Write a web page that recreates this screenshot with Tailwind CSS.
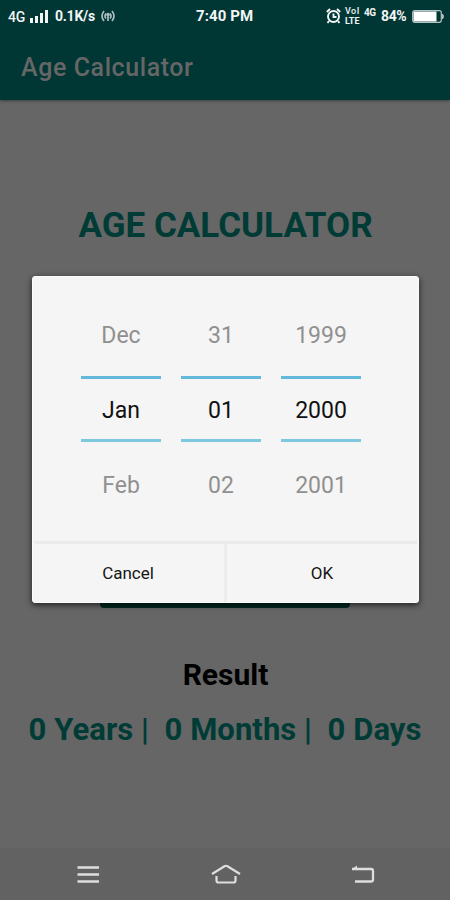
<!DOCTYPE html>
<html lang="en">
<head>
  <meta charset="UTF-8">
  <meta name="viewport" content="width=device-width, initial-scale=1.0">
  <title>Age Calculator</title>
  <script src="https://cdn.jsdelivr.net/npm/@tailwindcss/browser@4"></script>
</head>
<body class="bg-[#666666] font-[Roboto,sans-serif]">
  <div class="relative flex h-[900px] w-[450px] flex-col overflow-hidden bg-[#666666]">
    <!-- Header -->
    <header class="h-[100px] shrink-0 bg-[#003634] shadow-[0_1px_3px_rgba(0,0,0,0.4)]">
      <!-- Status bar -->
      <div class="grid h-8 grid-cols-[196px_114px_140px] items-center text-sm font-bold text-[#f1f5f4]">
        <div class="flex items-center pl-2">
          <span class="w-[19px] pt-0.5 text-[14px] font-medium tracking-[-0.3px]">4G</span>
          <svg class="ml-[3px] h-[15px] w-[18px]" viewBox="0 0 18 15" fill="currentColor">
            <path d="M0 9h3v5H0zM5 7h3v7H5zM10 4h3v10h-3zM15 1h3v13h-3z"/>
          </svg>
          <span class="ml-[7px] w-[42px] whitespace-nowrap text-[14px] tracking-[-0.25px]">0.1K/s</span>
          <svg class="ml-[4px] h-3 w-[14px]" viewBox="0 0 14 12" fill="none" stroke="#a9bfbd" stroke-width="1.7">
            <path d="M3 1Q-1 6 3 11M11 1q4 5 0 10M5 3.500Q3 6 5 8.500M9 3.500q2 2.500 0 5M7 5v6"/>
            <circle cx="7" cy="4.500" r="1"/>
          </svg>
        </div>
        <span class="whitespace-nowrap pt-px text-[15px] tracking-[0.1px]">7:40 PM</span>
        <div class="flex items-center pl-4">
          <svg class="h-4 w-[15px]" viewBox="0 0 15 16" fill="none" stroke="currentColor" stroke-width="1.9">
            <circle cx="7.500" cy="8.500" r="5.500"/>
            <path d="M7.500 5.500v3.500h3M.8 4 4 1M14.200 4 11 1M3 13l-1.500 2M12 13l1.500 2"/>
          </svg>
          <span class="ml-1 flex w-[17px] flex-col text-[9px] leading-[10px]">
            <span class="h-[9px] leading-[9px] font-medium tracking-[0.5px]">VoI</span>
            <span class="h-[10px]">LTE</span>
          </span>
          <span class="mb-[6px] ml-[2px] w-[13px] text-[10px] leading-[8px] tracking-[-0.4px]">4G</span>
          <span class="ml-[4px] w-[28px] text-[14px] tracking-[-0.4px]">84%</span>
          <svg class="ml-[3px] h-[13px] w-[33px]" viewBox="0 0 33 13">
            <rect x=".7" y=".7" width="28.600" height="11.600" rx="2" fill="none" stroke="#b5c5c3" stroke-width="1.200"/>
            <rect x="1.500" y="1.500" width="23" height="10" fill="#ffffff"/>
            <path d="M30.500 4q2 2.500 0 5z" fill="#b5c5c3" stroke="#b5c5c3"/>
          </svg>
        </div>
      </div>
      <h1 class="pt-[18px] pl-[21px] text-[25px] leading-9 font-medium tracking-[0.58px] text-[#666666]">Age Calculator</h1>
    </header>

    <!-- Calculator -->
    <main class="flex flex-1 flex-col items-center pt-[105px]">
      <h2 class="pl-px text-[35px] leading-[42px] font-bold whitespace-nowrap text-[#003b36]">AGE CALCULATOR</h2>
      <button class="mt-[309px] h-[52px] w-[250px] rounded bg-[#00261f]" aria-label="Select date"></button>
      <h3 class="mt-[47px] pl-px text-[30px] leading-10 font-bold text-black">Result</h3>
      <p class="mt-[15px] text-[31px] leading-10 font-bold tracking-[0.07px] whitespace-pre text-[#003b36]">0 Years |  0 Months |  0 Days</p>
    </main>

    <!-- Navigation bar -->
    <nav class="grid h-[52px] shrink-0 grid-cols-[176px_100px_174px] items-center justify-items-center bg-[#626262] text-[#dedede]">
      <svg class="h-6 w-6" viewBox="0 0 24 24" fill="none" stroke="currentColor" stroke-width="2.500">
        <path d="M1.500 5.500h21.500M1.500 12.500h21.500M1.500 19.500h21.500"/>
      </svg>
      <svg class="h-6 w-8" viewBox="0 0 32 24" fill="none" stroke="currentColor" stroke-width="2.200" stroke-linejoin="round">
        <path d="M2 12 14.500 4.200q1.500-.9 3 0L30 12M6.500 14v4.500q0 2 2 2h15q2 0 2-2v-4.500"/>
      </svg>
      <svg class="h-6 w-6" viewBox="0 0 24 24" fill="none" stroke="currentColor" stroke-width="2.300">
        <path d="M1 7h19q2 0 2 2v8.500q0 2-2 2H4"/>
        <path d="M1 7 6 3.500v3.500z" fill="currentColor" stroke="none"/>
      </svg>
    </nav>

    <!-- Date picker dialog -->
    <div class="absolute top-[276px] left-8 flex h-[327px] w-[387px] flex-col rounded-[3px] border border-[#fcfcfc] bg-[#f5f5f5] shadow-[0_2px_6px_rgba(0,0,0,0.7)]" role="dialog">
      <div class="grid h-[264px] grid-cols-[80px_80px_80px] gap-x-5 pl-12 text-center text-[23px] leading-[30px]">
        <div class="flex flex-col text-[#909090]">
          <span class="mt-[44px]">Dec</span>
          <span class="mt-[25px] flex h-[66px] items-center justify-center border-y-[3px] border-t-[#63b9d9] border-b-[#7cc8df] pt-[3px] text-[#111111]">Jan</span>
          <span class="mt-[29px]">Feb</span>
        </div>
        <div class="flex flex-col text-[#909090]">
          <span class="mt-[44px]">31</span>
          <span class="mt-[25px] flex h-[66px] items-center justify-center border-y-[3px] border-t-[#63b9d9] border-b-[#7cc8df] pt-[3px] text-[#111111]">01</span>
          <span class="mt-[29px]">02</span>
        </div>
        <div class="flex flex-col text-[#909090]">
          <span class="mt-[44px]">1999</span>
          <span class="mt-[25px] flex h-[66px] items-center justify-center border-y-[3px] border-t-[#63b9d9] border-b-[#7cc8df] pt-[3px] text-[#111111]">2000</span>
          <span class="mt-[29px]">2001</span>
        </div>
      </div>
      <div class="mx-px grid flex-1 grid-cols-[193px_1fr] border-t-3 border-[#ebebeb] text-[17px] text-[#151515]">
        <button class="border-r-3 border-[#ececec] pt-0.5 pr-0.5">Cancel</button>
        <button class="pt-0.5">OK</button>
      </div>
    </div>
  </div>
</body>
</html>
